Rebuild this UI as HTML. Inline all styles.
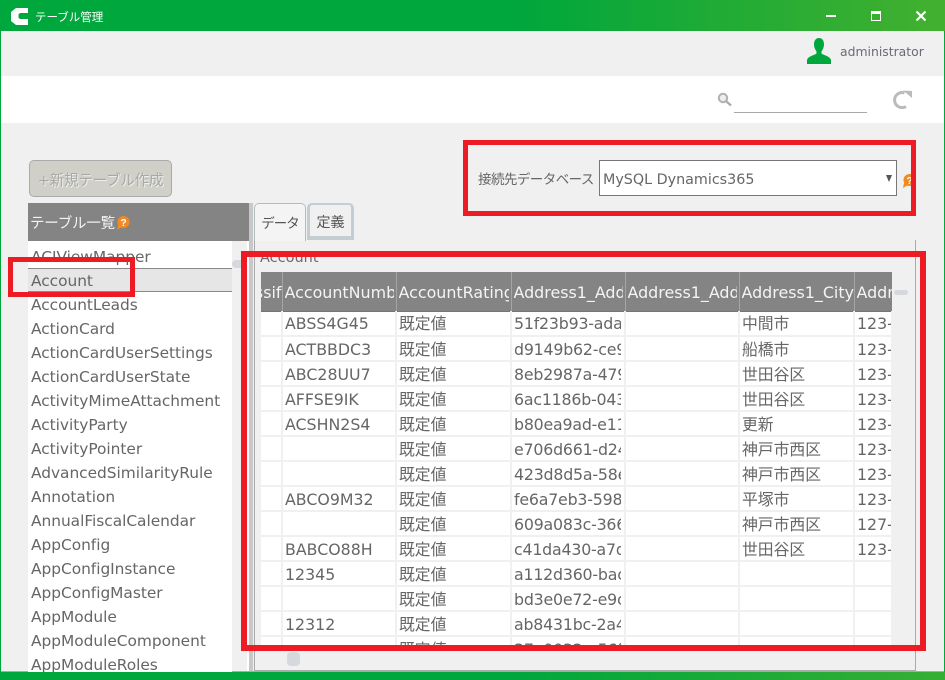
<!DOCTYPE html>
<html lang="ja"><head><meta charset="utf-8"><title>テーブル管理</title>
<style>
html,body{margin:0;padding:0}
body{width:945px;height:680px;overflow:hidden;position:relative;background:#f0f0f0;font-family:"DejaVu Sans","Noto Sans CJK JP",sans-serif;color:#666;font-size:15px}
.a{position:absolute;white-space:nowrap}
.red{position:absolute;border:5px solid #ed1c24;box-sizing:border-box;z-index:9}
#list{position:absolute;left:28px;top:241px;width:204px;height:431px;background:#fff;overflow:hidden;padding-top:3px;box-sizing:border-box}
#list div{height:24px;line-height:26px;padding-left:3px;font-size:15.4px;color:#666;letter-spacing:-.03px;white-space:nowrap;box-sizing:border-box}
#list div.s{background:#e6e6e6;border-top:1px solid #888;border-bottom:1px solid #888;line-height:24px}
#tb{position:absolute;left:261px;top:272px;width:631px;height:379px;overflow:hidden;background:#fff}
table{border-collapse:collapse;table-layout:fixed;width:631px;position:absolute;left:0;top:0}
th{background:#848484;color:#f4f4f4;font-weight:normal;height:39px;padding:0;border-right:1px solid #a5a5a5;border-bottom:1px solid #757575;box-sizing:border-box;font-size:15.9px}
td{height:25px;padding:0;border-right:2px solid #f0f0f0;border-bottom:2px solid #f0f0f0;box-sizing:border-box;font-size:15.8px;color:#666}
td:nth-child(4){letter-spacing:-.2px}
th div,td div{overflow:hidden;white-space:nowrap;margin:0 2px 0 2px;position:relative;top:1px}
td div{line-height:22px;margin-right:3px}
</style></head><body>
<!-- title bar -->
<div class="a" style="left:0;top:0;width:945px;height:31px;background:linear-gradient(90deg,#00a73c 0%,#00a73c 55%,#43b02f 100%)"></div>
<svg class="a" style="left:10px;top:7px" width="20" height="19" viewBox="0 0 20 19"><path d="M6 1H18V6H10L8.500 7.500V10.500L10 12H18V18H6L1 14V5Z" fill="#fff"/></svg>
<div class="a" style="left:35px;top:8px;font-size:11.5px;line-height:18px;color:#fff">テーブル管理</div>
<div class="a" style="left:826px;top:15px;width:10px;height:2px;background:#fff"></div>
<div class="a" style="left:871px;top:11px;width:10px;height:10px;box-sizing:border-box;border:1.500px solid #fff;border-top-width:3px"></div>
<svg class="a" style="left:915px;top:10px" width="12" height="12" viewBox="0 0 12 12"><path d="M1.500 1.500L10.500 10.500M10.500 1.500L1.500 10.500" stroke="#fff" stroke-width="2.200"/></svg>
<!-- side borders + bottom -->
<div class="a" style="left:0;top:31px;width:1px;height:649px;background:#00a73c"></div>
<div class="a" style="left:944px;top:31px;width:1px;height:649px;background:#00a73c"></div>
<div class="a" style="left:0;top:672px;width:945px;height:8px;background:linear-gradient(90deg,#00a73c,#00a73c 55%,#36ae33)"></div>
<div class="a" style="left:1px;top:671px;width:943px;height:1px;background:#aaa"></div>
<!-- user -->
<svg class="a" style="left:806px;top:37px" width="26" height="28" viewBox="0 0 26 28"><path d="M13 1C9.500 1 8 4 8 7.500C8 10.500 9.500 13 10.500 14.500V16.500C8 18.500 2 19 1 23V27H25V23C24 19 18 18.500 15.500 16.500V14.500C16.500 13 18 10.500 18 7.500C18 4 16.500 1 13 1Z" fill="#00a73c"/></svg>
<div class="a" style="left:840px;top:43px;font-size:12.400px;line-height:18px;color:#6a6a78">administrator</div>
<!-- toolbar -->
<div class="a" style="left:1px;top:76px;width:943px;height:47px;background:#fff"></div>
<svg class="a" style="left:717px;top:92px" width="16" height="15" viewBox="0 0 16 15"><circle cx="6" cy="6" r="4.200" fill="#eee" stroke="#b0b0b0" stroke-width="2"/><path d="M9.500 9.500L14 13.500" stroke="#aaa" stroke-width="2.200"/></svg>
<div class="a" style="left:734px;top:112px;width:133px;height:1px;background:#aaa"></div>
<svg class="a" style="left:892px;top:89px" width="21" height="20" viewBox="0 0 21 20"><path d="M14 17.500A7.500 7.500 0 1 1 12.500 4" fill="none" stroke="#bbb" stroke-width="3"/><path d="M11 1.500L20 2L20 9Z" fill="#bbb"/></svg>
<!-- new button -->
<div class="a" style="left:29px;top:160px;width:143px;height:37px;box-sizing:border-box;background:#d0d0c9;border:1px solid #aaa;border-radius:5px;text-align:center;line-height:39px;font-size:14.6px;color:#a9a9a4;text-shadow:1px 1px 0 #eee;letter-spacing:-.3px">+新規テーブル作成</div>
<!-- list header -->
<div class="a" style="left:28px;top:203px;width:221px;height:38px;background:#848484"></div>
<div class="a" style="left:30px;top:214px;font-size:14.5px;line-height:21px;color:#f4f4f4;letter-spacing:-.2px">テーブル一覧</div>
<svg class="a" style="left:116px;top:215px" width="14" height="16" viewBox="0 0 14 16"><circle cx="7.500" cy="7" r="6" fill="#f08a24"/><path d="M2 10L1 15L6 12Z" fill="#f08a24"/><text x="7.500" y="11" text-anchor="middle" font-size="10" font-weight="bold" fill="#fff" font-family="Liberation Sans">?</text></svg>
<!-- list -->
<div id="list">
<div>ACIViewMapper</div>
<div class="s">Account</div>
<div>AccountLeads</div>
<div>ActionCard</div><div>ActionCardUserSettings</div><div>ActionCardUserState</div><div>ActivityMimeAttachment</div><div>ActivityParty</div><div>ActivityPointer</div><div>AdvancedSimilarityRule</div><div>Annotation</div><div>AnnualFiscalCalendar</div><div>AppConfig</div><div>AppConfigInstance</div><div>AppConfigMaster</div><div>AppModule</div><div>AppModuleComponent</div><div>AppModuleRoles</div>
</div>
<div class="a" style="left:232px;top:243px;width:15px;height:428px;background:#f0f0f0"></div>
<div class="a" style="left:232px;top:260px;width:15px;height:8px;background:#d5d8dc;border-radius:4px"></div>
<div class="a" style="left:247px;top:241px;width:2px;height:430px;background:#fff"></div>
<div class="a" style="left:249px;top:203px;width:4px;height:468px;background:#c8c8c8"></div>
<!-- content panel -->
<div class="a" style="left:254px;top:240px;width:662px;height:431px;box-sizing:border-box;border:1px solid #aaa;border-top:0"></div>
<!-- tabs -->
<div class="a" style="left:254px;top:203px;width:52px;height:38px;box-sizing:border-box;background:#f4f4f4;border:1px solid #b5bcc0;border-bottom:0;border-radius:5px 5px 0 0;text-align:center;line-height:40px;font-size:13.5px;letter-spacing:-1px;color:#555;z-index:2">データ</div>
<div class="a" style="left:307px;top:203px;width:47px;height:37px;box-sizing:border-box;background:#f0f0f0;border:3px solid #c3cdd2;border-bottom-width:4px;border-top-width:2px;border-radius:5px 5px 0 0;text-align:center;line-height:36px;font-size:14px;color:#555">定義</div>
<div class="a" style="left:260px;top:248px;font-size:14.5px;line-height:20px;color:#6a6a6a">Account</div>
<!-- table -->
<div id="tb">
<table>
<colgroup><col style="width:21px"><col style="width:114px"><col style="width:115px"><col style="width:114px"><col style="width:114px"><col style="width:115px"><col style="width:38px"></colgroup>
<tr><th><div style="direction:rtl;margin:0">ssif</div></th><th style="text-align:left"><div>AccountNumb</div></th><th style="text-align:left"><div>AccountRating</div></th><th style="text-align:left"><div>Address1_Add</div></th><th style="text-align:left"><div>Address1_Add</div></th><th style="text-align:left"><div style="margin-right:0">Address1_City</div></th><th style="text-align:left;border-right:0"><div style="margin-right:0">Addr</div></th></tr>
<tr><td></td><td><div>ABSS4G45</div></td><td><div>既定値</div></td><td><div>51f23b93-ada</div></td><td></td><td><div>中間市</div></td><td><div style="margin-right:0">123-</div></td></tr>
<tr><td></td><td><div>ACTBBDC3</div></td><td><div>既定値</div></td><td><div>d9149b62-ce9</div></td><td></td><td><div>船橋市</div></td><td><div style="margin-right:0">123-</div></td></tr>
<tr><td></td><td><div>ABC28UU7</div></td><td><div>既定値</div></td><td><div>8eb2987a-479</div></td><td></td><td><div>世田谷区</div></td><td><div style="margin-right:0">123-</div></td></tr>
<tr><td></td><td><div>AFFSE9IK</div></td><td><div>既定値</div></td><td><div>6ac1186b-043</div></td><td></td><td><div>世田谷区</div></td><td><div style="margin-right:0">123-</div></td></tr>
<tr><td></td><td><div>ACSHN2S4</div></td><td><div>既定値</div></td><td><div>b80ea9ad-e11</div></td><td></td><td><div>更新</div></td><td><div style="margin-right:0">123-</div></td></tr>
<tr><td></td><td></td><td><div>既定値</div></td><td><div>e706d661-d24</div></td><td></td><td><div>神戸市西区</div></td><td><div style="margin-right:0">123-</div></td></tr>
<tr><td></td><td></td><td><div>既定値</div></td><td><div>423d8d5a-58e</div></td><td></td><td><div>神戸市西区</div></td><td><div style="margin-right:0">123-</div></td></tr>
<tr><td></td><td><div>ABCO9M32</div></td><td><div>既定値</div></td><td><div>fe6a7eb3-598</div></td><td></td><td><div>平塚市</div></td><td><div style="margin-right:0">123-</div></td></tr>
<tr><td></td><td></td><td><div>既定値</div></td><td><div>609a083c-366</div></td><td></td><td><div>神戸市西区</div></td><td><div style="margin-right:0">127-</div></td></tr>
<tr><td></td><td><div>BABCO88H</div></td><td><div>既定値</div></td><td><div>c41da430-a7d</div></td><td></td><td><div>世田谷区</div></td><td><div style="margin-right:0">123-</div></td></tr>
<tr><td></td><td><div>12345</div></td><td><div>既定値</div></td><td><div>a112d360-bac</div></td><td></td><td></td><td></td></tr>
<tr><td></td><td></td><td><div>既定値</div></td><td><div>bd3e0e72-e9c</div></td><td></td><td></td><td></td></tr>
<tr><td></td><td><div>12312</div></td><td><div>既定値</div></td><td><div>ab8431bc-2a4</div></td><td></td><td></td><td></td></tr>
<tr><td></td><td></td><td><div>既定値</div></td><td><div>37e0032a-56f</div></td><td></td><td></td><td></td></tr>
</table>
</div>
<div class="a" style="left:894px;top:290px;width:14px;height:5px;background:#d5d8dc;border-radius:3px"></div>
<div class="a" style="left:287px;top:652px;width:13px;height:14px;background:#d5d8dc;border-radius:4px"></div>
<!-- DB select -->
<div class="a" style="left:478px;top:170px;font-size:13.5px;line-height:20px;color:#666;letter-spacing:-.55px">接続先データベース</div>
<div class="a" style="left:599px;top:160px;width:298px;height:36px;box-sizing:border-box;background:#fff;border:1px solid #777;line-height:38px;padding-left:3px;font-size:14.3px;color:#666">MySQL Dynamics365</div>
<div class="a" style="left:886px;top:175px;width:0;height:0;border-left:3.500px solid transparent;border-right:3.500px solid transparent;border-top:7px solid #555"></div>
<svg class="a" style="left:902px;top:173px" width="14" height="16" viewBox="0 0 14 16"><circle cx="7.500" cy="7" r="6" fill="#f08a24"/><path d="M2 10L1 15L6 12Z" fill="#f08a24"/><text x="7.500" y="11" text-anchor="middle" font-size="10" font-weight="bold" fill="#fff" font-family="Liberation Sans">?</text></svg>
<!-- red annotations -->
<div class="red" style="left:463px;top:140px;width:453px;height:76px"></div>
<div class="red" style="left:241px;top:251px;width:685px;height:400px;border-width:6px"></div>
<div class="red" style="left:8px;top:257px;width:127px;height:40px"></div>
</body></html>
